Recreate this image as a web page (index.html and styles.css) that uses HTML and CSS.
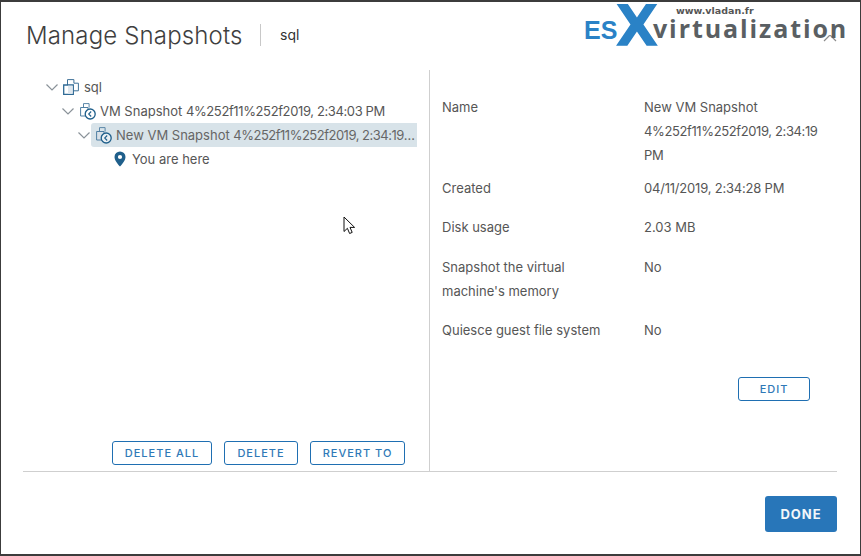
FILE: index.html
```html
<!DOCTYPE html>
<html lang="en">
<head>
<meta charset="utf-8">
<title>Manage Snapshots</title>
<link rel="stylesheet" href="styles.css">
</head>
<body>
<div class="dialog">
  <header class="head">
    <h1 class="title">Manage Snapshots</h1>
    <span class="target">sql</span>
  </header>
  <svg class="close" width="14" height="14" viewBox="0 0 14 14"><path d="M1 1l12 12M13 1L1 13" fill="none" stroke="#8c8c8c" stroke-width="1.2"/></svg>
  <div class="logo">
    <span class="logo-url">www.vladan.fr</span>
    <span class="logo-es">ES</span><span class="logo-x">X</span><span class="logo-virt">virtualization</span>
  </div>
  <main class="body">
    <section class="left">
      <ul class="tree">
        <li class="node">
          <svg class="chev" width="14" height="14" viewBox="0 0 14 14"><path d="M1.5 4.5L7 10l5.5-5.5" fill="none" stroke="#8a9299" stroke-width="1.2"/></svg>
          <svg class="icon" width="16" height="16" viewBox="0 0 16 16"><path d="M4.5 6V.6h6.4v3.6h4.5v7.6h-5" fill="none" stroke="#3f7198" stroke-width="1"/><path d="M.7 6h9.6v9.3H.7z" fill="#fff" stroke="#2f6a95" stroke-width="1.3"/><path d="M5 6.6h4.7v8.1H5z" fill="#dfe7ee"/></svg>
          <span>sql</span>
        </li>
        <li class="node node-l1">
          <svg class="chev" width="14" height="14" viewBox="0 0 14 14"><path d="M1.5 4.5L7 10l5.5-5.5" fill="none" stroke="#8a9299" stroke-width="1.2"/></svg>
          <svg class="icon" width="16" height="17" viewBox="0 0 16 17"><path d="M3.5 4V.6h5.6v4" fill="none" stroke="#5b87a8" stroke-width="1"/><path d="M.6 4.5h7.4v8.5H.6z" fill="#fff" stroke="#4f7fa3" stroke-width="1"/><circle cx="10.2" cy="11" r="5" fill="#fff" stroke="#1f5f8b" stroke-width="1.3"/><path d="M11.2 8.5L8.7 11l2.5 2.5" fill="none" stroke="#1f5f8b" stroke-width="1.1"/></svg>
          <span>VM Snapshot <span class="num">4%252f11%252f2019, 2:34:03 PM</span></span>
        </li>
        <li class="node node-l2">
          <svg class="chev" width="14" height="14" viewBox="0 0 14 14"><path d="M1.5 4.5L7 10l5.5-5.5" fill="none" stroke="#8a9299" stroke-width="1.2"/></svg>
          <div class="selected">
            <svg class="icon" width="16" height="17" viewBox="0 0 16 17"><path d="M3.5 4V.6h5.6v4" fill="none" stroke="#5b87a8" stroke-width="1"/><path d="M.6 4.5h7.4v8.5H.6z" fill="#d9e1e8" stroke="#4f7fa3" stroke-width="1"/><circle cx="10.2" cy="11" r="5" fill="#e9eff3" stroke="#1f5f8b" stroke-width="1.3"/><path d="M11.2 8.5L8.7 11l2.5 2.5" fill="none" stroke="#1f5f8b" stroke-width="1.1"/></svg>
            <span class="sel-text">New VM Snapshot <span class="num">4%252f11%252f2019, 2:34:19 PM</span></span>
          </div>
        </li>
        <li class="node node-l3">
          <svg class="icon" width="12" height="16" viewBox="0 0 12 16"><path fill-rule="evenodd" d="M6 .5a5.5 5.5 0 0 1 5.5 5.5c0 3.4-3.6 7.6-5.5 9.5C4.1 13.6.5 9.4.5 6A5.5 5.5 0 0 1 6 .5zm0 3.4a2.1 2.1 0 1 0 0 4.2 2.1 2.1 0 0 0 0-4.2z" fill="#1f5f8b"/></svg>
          <span>You are here</span>
        </li>
      </ul>
      <div class="actions">
        <button class="btn btn-all">DELETE ALL</button>
        <button class="btn btn-del">DELETE</button>
        <button class="btn btn-rev">REVERT TO</button>
      </div>
    </section>
    <section class="right">
      <dl class="props">
        <dt class="first">Name</dt><dd class="first">New VM Snapshot <span class="num">4%252f11%252f2019, 2:34:19 PM</span></dd>
        <dt>Created</dt><dd><span class="num-short">04/11/2019, 2:34:28 PM</span></dd>
        <dt class="disk">Disk usage</dt><dd class="disk">2.03 MB</dd>
        <dt>Snapshot the virtual machine's memory</dt><dd>No</dd>
        <dt>Quiesce guest file system</dt><dd>No</dd>
      </dl>
      <div class="edit-row"><button class="btn btn-edit">EDIT</button></div>
    </section>
  </main>
  <footer class="foot"><button class="done">DONE</button></footer>
  <svg class="cursor" width="14" height="20" viewBox="0 0 14 20"><path d="M1 1v14.5l3.4-3.2 2.2 5.2 2.6-1.1-2.2-5h4.6z" fill="#fff" stroke="#111" stroke-width="1"/></svg>
</div>
</body>
</html>
```
FILE: styles.css
```css
* { box-sizing: border-box; }
html, body { margin: 0; padding: 0; background: #fff; }
body { font-family: "Inter", "Liberation Sans", sans-serif; color: #565656; }
.dialog {
  position: relative;
  width: 861px;
  height: 556px;
  border: 1px solid #3c3c3c;
  border-top-width: 2px;
  border-bottom-width: 2px;
  padding: 0 23px 0 22px;
  display: flex;
  flex-direction: column;
  background: #fff;
  overflow: hidden;
}
.head { height: 68px; display: flex; align-items: center; padding: 0 0 2px 3px; }
.title { margin: 0; font-size: 24px; font-weight: 300; color: #3f3f3f; width: 234px; white-space: nowrap; letter-spacing: .15px; }
.target { border-left: 1px solid #c8c8c8; height: 22px; line-height: 22px; padding-left: 19px; font-size: 14px; color: #333; }
.close { position: absolute; left: 822px; top: 26px; }
.logo { position: absolute; left: 583px; top: 3px; width: 266px; height: 30px; background: #fff; }
.logo > span { position: absolute; white-space: nowrap; }
.logo-url { left: 92px; top: 0; font: bold 9.5px/11px "DejaVu Sans", sans-serif; color: #555; }
.logo-es { left: 0; top: 13px; font: bold 25px/24px "Liberation Sans", sans-serif; color: #2a82c6; }
.logo-x { left: 31px; top: 0; font: bold 57px/42px "DejaVu Sans", sans-serif; color: #2a82c6; }
.logo-virt { left: 69px; top: 11px; font: 700 25px/24px "Open Sans", sans-serif; letter-spacing: 1.9px; color: #5a5f63; }
.body { flex: 1; display: flex; min-height: 0; border-bottom: 1px solid #cfcfcf; }
.left { width: 407px; border-right: 1px solid #cfcfcf; display: flex; flex-direction: column; padding-top: 5px; }
.tree { list-style: none; margin: 0; padding: 0 12px 0 22px; flex: 1; font-size: 13px; color: #565656; }
.node { height: 24px; display: flex; align-items: center; white-space: nowrap; }
.node .chev { margin-right: 4px; flex: none; }
.node .icon { flex: none; margin-right: 5px; }
.node-l1 { padding-left: 16px; }
.node-l1 .chev { margin-right: 5px; }
.node-l1 .icon { margin-right: 4px; }
.node-l2 { padding-left: 32px; }
.node-l3 { padding-left: 69px; }
.node-l3 .icon { margin-right: 6px; }
.selected { flex: 1; min-width: 0; height: 24px; display: flex; align-items: center; margin-left: -4px; padding-left: 5px; background: #d8e3e9; border-radius: 3px 0 0 3px; }
.selected .icon { margin-right: 4px; }
.sel-text { overflow: hidden; text-overflow: ellipsis; color: #666; }
.num { letter-spacing: -.38px; }
.sel-text .num { letter-spacing: -.5px; }
.num-short { letter-spacing: -.2px; }
.actions { display: flex; justify-content: flex-end; gap: 12px; padding: 0 24px 6px 0; }
.btn { height: 24px; padding: 0; background: #fff; border: 1px solid #1f6fb2; border-radius: 3px; color: #2f79b7; font: 500 11px/22px "Inter", "Liberation Sans", sans-serif; letter-spacing: 1px; }
.btn-all { width: 100px; }
.btn-del { width: 74px; }
.btn-rev { width: 95px; }
.btn-edit { width: 72px; }
.right { flex: 1; min-width: 0; padding: 25px 10px 0 12px; font-size: 13px; }
.props { margin: 0; display: grid; grid-template-columns: 202px 1fr; line-height: 24px; color: #565656; }
.props dt { width: 160px; margin: 0 0 15px; }
.props dd { margin: 0 0 15px; }
.props .first { margin-bottom: 9px; }
.props .disk { margin-bottom: 16px; }
.edit-row { display: flex; justify-content: flex-end; padding: 20px 17px 0 0; }
.foot { height: 82px; display: flex; justify-content: flex-end; align-items: flex-start; padding-top: 24px; }
.done { width: 72px; height: 36px; border: 0; border-radius: 3px; background: #2876b9; color: #f2f6fa; font: 700 13px/36px "Inter", "Liberation Sans", sans-serif; letter-spacing: 1px; padding: 0; }
.cursor { position: absolute; left: 342px; top: 214px; }
```
